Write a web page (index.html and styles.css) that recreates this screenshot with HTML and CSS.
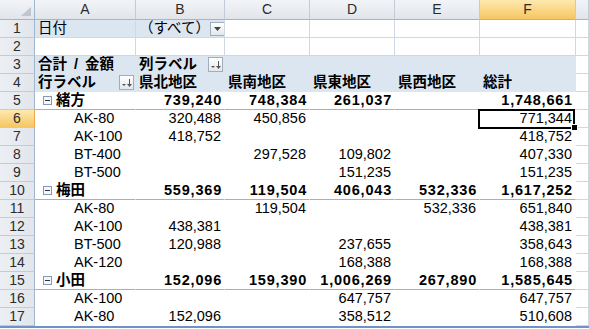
FILE: index.html
```html
<!DOCTYPE html>
<html lang="ja">
<head>
    <meta charset="UTF-8">
    <title>ピボットテーブル</title>
    <link rel="stylesheet" href="styles.css">
</head>
<body>
    <div class="sheet">
        <div class="row head">
            <div class="c corner"><svg width="10" height="9" viewBox="0 0 10 9"><path d="M10 0V9H0z" fill="#bfc6cf"/></svg></div>
            <div class="c">A</div>
            <div class="c">B</div>
            <div class="c">C</div>
            <div class="c">D</div>
            <div class="c">E</div>
            <div class="c sel">F</div>
            <div class="c"></div>
        </div>

        <div class="row">
            <div class="c rh">1</div>
            <div class="c blue">日付</div>
            <div class="c blue has-btn">（すべて）<span class="btn wide"><svg width="7" height="4"><path d="M0 0h7L3.5 4z" fill="#444"/></svg></span></div>
            <div class="c"></div><div class="c"></div><div class="c"></div><div class="c"></div><div class="c"></div>
        </div>
        <div class="row">
            <div class="c rh">2</div>
            <div class="c"></div><div class="c"></div><div class="c"></div><div class="c"></div><div class="c"></div><div class="c"></div><div class="c"></div>
        </div>
        <div class="row">
            <div class="c rh">3</div>
            <div class="c pv blue b spaced">合計 / 金額</div>
            <div class="c pv blue b has-btn">列ラベル<span class="btn"><svg width="11" height="10"><path d="M1 6h4L3 8z" fill="#555"/><path d="M8.5 1v7" stroke="#555"/><path d="M6 6l2.5 3L11 6z" fill="#555"/></svg></span></div>
            <div class="c pv blue"></div><div class="c pv blue"></div><div class="c pv blue"></div><div class="c pv blue"></div>
            <div class="c"></div>
        </div>
        <div class="row">
            <div class="c rh">4</div>
            <div class="c pv blue b has-btn">行ラベル<span class="btn"><svg width="11" height="10"><path d="M1 6h4L3 8z" fill="#555"/><path d="M8.5 1v7" stroke="#555"/><path d="M6 6l2.5 3L11 6z" fill="#555"/></svg></span></div>
            <div class="c pv blue b">県北地区</div>
            <div class="c pv blue b">県南地区</div>
            <div class="c pv blue b">県東地区</div>
            <div class="c pv blue b">県西地区</div>
            <div class="c pv blue b">総計</div>
            <div class="c"></div>
        </div>

        <div class="row">
            <div class="c rh">5</div>
            <div class="c pv sub grp b"><svg class="tog" width="9" height="9"><rect x="0.5" y="0.5" width="8" height="8" fill="#f4f6f9" stroke="#8499b6"/><path d="M2 4.5h5" stroke="#333"/></svg>緒方</div>
            <div class="c pv sub num bn">739,240</div>
            <div class="c pv sub num bn">748,384</div>
            <div class="c pv sub num bn">261,037</div>
            <div class="c pv sub num bn"></div>
            <div class="c pv sub num bn">1,748,661</div>
            <div class="c"></div>
        </div>
        <div class="row">
            <div class="c rh sel">6</div>
            <div class="c pv item">AK-80</div>
            <div class="c pv num">320,488</div>
            <div class="c pv num">450,856</div>
            <div class="c pv num"></div>
            <div class="c pv num"></div>
            <div class="c pv num active">771,344</div>
            <div class="c"></div>
        </div>
        <div class="row">
            <div class="c rh">7</div>
            <div class="c pv item">AK-100</div>
            <div class="c pv num">418,752</div>
            <div class="c pv num"></div>
            <div class="c pv num"></div>
            <div class="c pv num"></div>
            <div class="c pv num">418,752</div>
            <div class="c"></div>
        </div>
        <div class="row">
            <div class="c rh">8</div>
            <div class="c pv item">BT-400</div>
            <div class="c pv num"></div>
            <div class="c pv num">297,528</div>
            <div class="c pv num">109,802</div>
            <div class="c pv num"></div>
            <div class="c pv num">407,330</div>
            <div class="c"></div>
        </div>
        <div class="row">
            <div class="c rh">9</div>
            <div class="c pv item">BT-500</div>
            <div class="c pv num"></div>
            <div class="c pv num"></div>
            <div class="c pv num">151,235</div>
            <div class="c pv num"></div>
            <div class="c pv num">151,235</div>
            <div class="c"></div>
        </div>

        <div class="row">
            <div class="c rh">10</div>
            <div class="c pv sub grp b"><svg class="tog" width="9" height="9"><rect x="0.5" y="0.5" width="8" height="8" fill="#f4f6f9" stroke="#8499b6"/><path d="M2 4.5h5" stroke="#333"/></svg>梅田</div>
            <div class="c pv sub num bn">559,369</div>
            <div class="c pv sub num bn">119,504</div>
            <div class="c pv sub num bn">406,043</div>
            <div class="c pv sub num bn">532,336</div>
            <div class="c pv sub num bn">1,617,252</div>
            <div class="c"></div>
        </div>
        <div class="row">
            <div class="c rh">11</div>
            <div class="c pv item">AK-80</div>
            <div class="c pv num"></div>
            <div class="c pv num">119,504</div>
            <div class="c pv num"></div>
            <div class="c pv num">532,336</div>
            <div class="c pv num">651,840</div>
            <div class="c"></div>
        </div>
        <div class="row">
            <div class="c rh">12</div>
            <div class="c pv item">AK-100</div>
            <div class="c pv num">438,381</div>
            <div class="c pv num"></div>
            <div class="c pv num"></div>
            <div class="c pv num"></div>
            <div class="c pv num">438,381</div>
            <div class="c"></div>
        </div>
        <div class="row">
            <div class="c rh">13</div>
            <div class="c pv item">BT-500</div>
            <div class="c pv num">120,988</div>
            <div class="c pv num"></div>
            <div class="c pv num">237,655</div>
            <div class="c pv num"></div>
            <div class="c pv num">358,643</div>
            <div class="c"></div>
        </div>
        <div class="row">
            <div class="c rh">14</div>
            <div class="c pv item">AK-120</div>
            <div class="c pv num"></div>
            <div class="c pv num"></div>
            <div class="c pv num">168,388</div>
            <div class="c pv num"></div>
            <div class="c pv num">168,388</div>
            <div class="c"></div>
        </div>

        <div class="row">
            <div class="c rh">15</div>
            <div class="c pv sub grp b"><svg class="tog" width="9" height="9"><rect x="0.5" y="0.5" width="8" height="8" fill="#f4f6f9" stroke="#8499b6"/><path d="M2 4.5h5" stroke="#333"/></svg>小田</div>
            <div class="c pv sub num bn">152,096</div>
            <div class="c pv sub num bn">159,390</div>
            <div class="c pv sub num bn">1,006,269</div>
            <div class="c pv sub num bn">267,890</div>
            <div class="c pv sub num bn">1,585,645</div>
            <div class="c"></div>
        </div>
        <div class="row">
            <div class="c rh">16</div>
            <div class="c pv item">AK-100</div>
            <div class="c pv num"></div>
            <div class="c pv num"></div>
            <div class="c pv num">647,757</div>
            <div class="c pv num"></div>
            <div class="c pv num">647,757</div>
            <div class="c"></div>
        </div>
        <div class="row">
            <div class="c rh">17</div>
            <div class="c pv item">AK-80</div>
            <div class="c pv num">152,096</div>
            <div class="c pv num"></div>
            <div class="c pv num">358,512</div>
            <div class="c pv num"></div>
            <div class="c pv num">510,608</div>
            <div class="c"></div>
        </div>
        <div class="frame"></div>
    </div>
</body>
</html>
```

FILE: styles.css
```css
body {
    margin: 0;
    overflow: hidden;
    background-color: #fff;
    color: #000;
    font-family: "Liberation Sans", "Noto Sans CJK JP", sans-serif;
    font-size: 14.5px;
}
.sheet {
    width: 589px;
    overflow: hidden;
}
.row {
    display: grid;
    grid-template-columns: 35px 101px 89px 85px 85px 85px 96px minmax(0, 1fr);
    height: 18px;
}
.c {
    box-sizing: border-box;
    border-right: 1px solid #d0d7e5;
    border-bottom: 1px solid #d0d7e5;
    padding: 0 3px;
    line-height: 17px;
    white-space: nowrap;
    overflow: hidden;
}

/* column / row headers */
.row.head {
    height: 20px;
}
.head .c {
    line-height: 19px;
    text-align: center;
    font-size: 14px;
    color: #2c2c2c;
    background: linear-gradient(#f2f4f7, #e1e5eb);
    border-right-color: #c3cbd6;
    border-bottom-color: #9eb6ce;
}
.head .corner {
    display: flex;
    align-items: flex-end;
    justify-content: flex-end;
    padding: 0 3px 3px 0;
    border-right-color: #9eb6ce;
}
.head .sel {
    background: linear-gradient(#fde9b0, #f6c661);
    border-bottom-color: #f0a64a;
}
.rh {
    padding: 0;
    text-align: center;
    font-size: 14px;
    color: #2c2c2c;
    background: linear-gradient(90deg, #eceff3, #e2e6ec);
    border-right-color: #9eb6ce;
    border-bottom-color: #c3cbd6;
}
.rh.sel {
    background: linear-gradient(#fde9b0, #f6c661);
    border-right-color: #f0a64a;
}

/* pivot table */
.blue {
    background-color: #dce6f1;
}
.pv {
    border-right-color: transparent;
    border-bottom-color: transparent;
}
.pv.sub {
    border-bottom-color: #95b3d7;
}
.b {
    font-weight: bold;
}
.spaced {
    word-spacing: 3px;
}
.num {
    text-align: right;
}
.bn {
    font-weight: bold;
    letter-spacing: 0.8px;
    padding-right: 2px;
}
.item {
    padding-left: 39px;
}
.grp {
    display: flex;
    align-items: center;
    padding-left: 8px;
}
.tog {
    margin-right: 4px;
    flex: none;
}
.has-btn {
    display: flex;
    align-items: center;
    justify-content: space-between;
    padding-right: 1px;
}
.btn {
    box-sizing: border-box;
    width: 15px;
    height: 15px;
    flex: none;
    display: flex;
    align-items: center;
    justify-content: center;
    border: 1px solid #a3adba;
    background: linear-gradient(#ffffff, #e3e7ed);
}
.btn.wide {
    width: 16px;
    height: 14px;
}

/* active cell */
.active {
    position: relative;
    overflow: visible;
}
.active::before {
    content: "";
    position: absolute;
    top: -1px;
    left: -2px;
    right: 0;
    bottom: -2px;
    border: 2px solid #000;
}
.active::after {
    content: "";
    position: absolute;
    right: -3px;
    bottom: -4px;
    width: 5px;
    height: 5px;
    background: #000;
    border: 1px solid #fff;
}

.frame {
    height: 4px;
    border-top: 2px solid #6f93c8;
}
```
